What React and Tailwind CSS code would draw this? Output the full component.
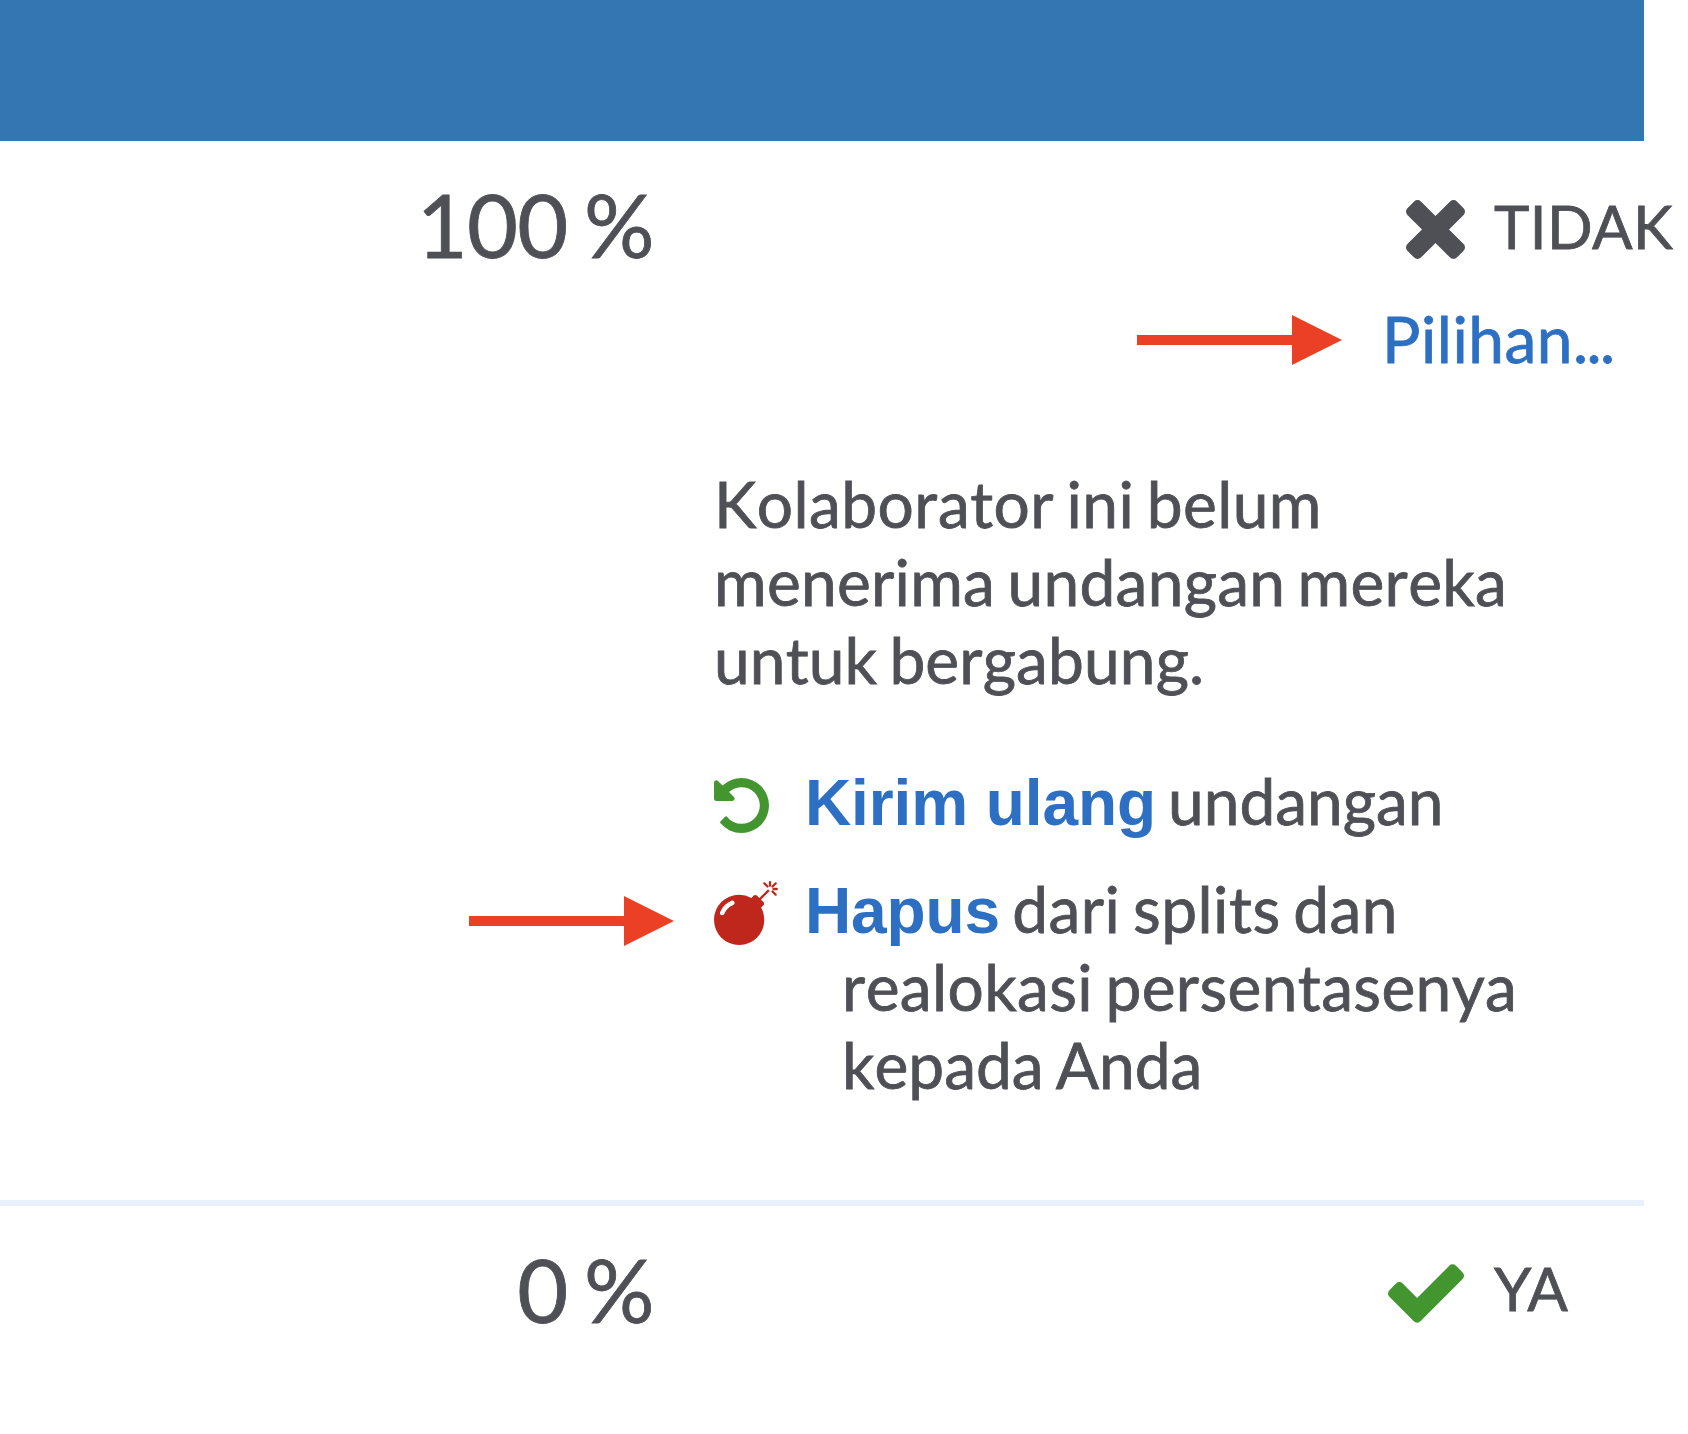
const ICONS = {
  times: {
    viewBox: '302 366 1188 1188',
    d: 'M1490 1322q0 40-28 68l-136 136q-28 28-68 28t-68-28l-294-294-294 294q-28 28-68 28t-68-28l-136-136q-28-28-28-68t28-68l294-294-294-294q-28-28-28-68t28-68l136-136q28-28 68-28t68 28l294 294 294-294q28-28 68-28t68 28l136 136q28 28 28 68t-28 68l-294 294 294 294q28 28 28 68z',
  },
  check: {
    viewBox: '121 334 1550 1188',
    d: 'M1671 566q0 40-28 68l-724 724-136 136q-28 28-68 28t-68-28l-136-136-362-362q-28-28-28-68t28-68l136-136q28-28 68-28t68 28l294 295 656-657q28-28 68-28t68 28l136 136q28 28 28 68z',
  },
  undo: {
    viewBox: '128 128 1536 1536',
    d: 'M1664 896q0 156-61 298t-164 245-245 164-298 61q-172 0-327-72.5t-264-204.5q-7-10-6.5-22.5t8.5-20.5l137-138q10-9 25-9 16 2 23 12 73 95 179 147t225 52q104 0 198.5-40.5t163.5-109.5 109.5-163.5 40.5-198.5-40.5-198.5-109.5-163.5-163.5-109.5-198.5-40.5q-98 0-188 35.5t-160 101.5l137 138q31 30 14 69-17 40-59 40h-448q-26 0-45-19t-19-45v-448q0-42 40-59 39-17 69 14l130 129q107-101 244.5-156.5t284.5-55.5q156 0 298 61t245 164 164 245 61 298z',
  },
  bomb: {
    viewBox: '0 0 1792 1792',
    d: 'M571 589q-10-25-34-35t-49 0q-108 44-191 127t-127 191q-10 25 0 49t35 34q13 5 24 5 42 0 60-40 34-84 98.5-148.5t148.5-98.5q25-11 35-35t0-49zm942-356l46 46-244 243 68 68q19 19 19 45.5t-19 45.5l-64 64q89 161 89 343 0 143-55.5 273.5t-150 225-225 150-273.5 55.5-273.5-55.5-225-150-150-225-55.5-273.5 55.5-273.5 150-225 225-150 273.5-55.5q182 0 343 89l64-64q19-19 45.5-19t45.5 19l68 68zm8-56q-10 10-22 10-13 0-23-10l-91-90q-9-10-9-23t9-23q10-9 23-9t23 9l90 91q10 9 10 22.5t-10 22.5zm230 230q-11 9-23 9t-23-9l-90-91q-10-9-10-22.5t10-22.5q9-10 22.5-10t22.5 10l91 90q9 10 9 23t-9 23zm41-183q0 14-9 23t-23 9h-96q-14 0-23-9t-9-23 9-23 23-9h96q14 0 23 9t9 23zm-192-192v96q0 14-9 23t-23 9-23-9-9-23v-96q0-14 9-23t23-9 23 9 9 23zm151 55l-91 90q-10 10-22 10-13 0-23-10-10-9-10-22.5t10-22.5l90-91q10-9 23-9t23 9q9 10 9 23t-9 23z',
  },
}

function Icon({ name, className }) {
  const icon = ICONS[name]
  return (
    <svg viewBox={icon.viewBox} className={className} fill="currentColor">
      <path d={icon.d} />
    </svg>
  )
}

function Arrow({ className }) {
  return (
    <svg viewBox="0 0 205 50" className={`w-[205px] h-[50px] shrink-0 text-[#eb4026] ${className}`} fill="currentColor">
      <path d="M0 20h155V0l50 25-50 25V30H0z" />
    </svg>
  )
}

function Percent({ value }) {
  return (
    <p className="pr-[59.5px] text-right text-[88px] leading-[106px] [word-spacing:-6px]">
      <span className="tracking-[-0.8px]">{value}</span> %
    </p>
  )
}

function Action({ children }) {
  return (
    <b className="font-['Liberation_Sans',sans-serif] leading-none tracking-[-0.1px] text-[#2d70c3] [word-spacing:0px] [-webkit-text-stroke:0px]">
      {children}
    </b>
  )
}

export default function App() {
  return (
    <div className="w-[1688px] h-[1434px] overflow-hidden bg-white font-['Lato',sans-serif] text-[#4f5056] whitespace-nowrap [-webkit-text-stroke:0.8px]">
      <div className="w-[1644px] h-[141px] bg-[#3476b2]" />

      {/* Pending collaborator */}
      <div className="flex w-[1644px] h-[1065px] border-b-[6px] border-[#e7f1fb]">
        <div className="w-[714px] shrink-0 pt-[30px]">
          <Percent value={100} />
          <Arrow className="ml-[469px] mt-[619px]" />
        </div>

        <div className="w-[930px] shrink-0 pt-[49px]">
          <div className="flex items-center pl-[692px] h-[72px]">
            <Icon name="times" className="w-[59px] h-[59px] mt-[7px] shrink-0" />
            <span className="ml-[29px] text-[60px] leading-[72px] tracking-[0.4px]">TIDAK</span>
          </div>

          <div className="flex items-center mt-[38px] h-[78px] pl-[423px]">
            <Arrow className="mt-[1px]" />
            <a className="ml-10 text-[64px] leading-[78px] tracking-[0.5px] text-[#2d70c3] [font-kerning:none]">
              Pilihan<span className="tracking-[-1.6px]">...</span>
            </a>
          </div>

          <p className="mt-[87px] text-[64px] leading-[78px] [word-spacing:-4.3px] [font-kerning:none]">
            <span className="tracking-[0.42px]">Kolaborator ini belum</span><br />
            <span className="tracking-[0.27px]">menerima undangan mereka</span><br />
            <span className="tracking-[0.13px]">untuk bergabung.</span>
          </p>

          <div className="flex mt-[63px] text-[64px] leading-[78px] [word-spacing:-4.3px] [font-kerning:none]">
            <Icon name="undo" className="w-[55px] h-[55px] mt-4 shrink-0 text-[#43962f]" />
            <p className="ml-9">
              <Action>Kirim ulang</Action> undangan
            </p>
          </div>

          <div className="flex mt-[30px] text-[64px] leading-[78px] [word-spacing:-4.3px] [font-kerning:none]">
            <Icon name="bomb" className="w-16 h-16 mt-[11px] shrink-0 text-[#c0271c]" />
            <p className="ml-16 -indent-[37px]">
              <Action>Hapus</Action> <span className="tracking-[0.48px]">dari splits dan</span><br />
              <span className="tracking-[0.37px]">realokasi persentasenya</span><br />
              kepada Anda
            </p>
          </div>
        </div>
      </div>

      {/* Accepted collaborator */}
      <div className="flex w-[1644px]">
        <div className="w-[714px] shrink-0 pt-[30px]">
          <Percent value={0} />
        </div>
        <div className="flex items-center pl-[674px] pt-[46px] h-[118px]">
          <Icon name="check" className="w-[76px] h-[59px] mt-[10px] shrink-0 text-[#43962f]" />
          <span className="ml-[30px] text-[60px] leading-[72px]">YA</span>
        </div>
      </div>
    </div>
  )
}
